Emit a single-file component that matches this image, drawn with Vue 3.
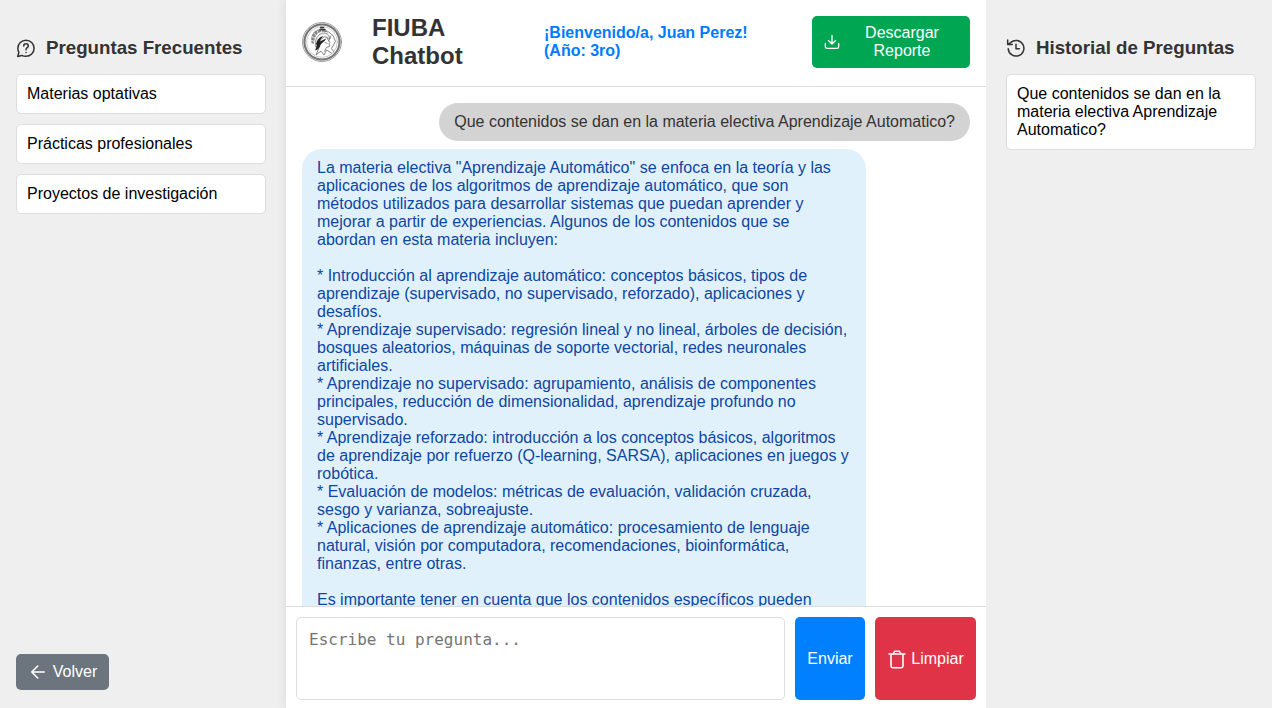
<script setup>
const faqs = ['Materias optativas', 'Prácticas profesionales', 'Proyectos de investigación']
const history = ['Que contenidos se dan en la materia electiva Aprendizaje Automatico?']
const answer = `La materia electiva "Aprendizaje Automático" se enfoca en la teoría y las aplicaciones de los algoritmos de aprendizaje automático, que son métodos utilizados para desarrollar sistemas que puedan aprender y mejorar a partir de experiencias. Algunos de los contenidos que se abordan en esta materia incluyen:

* Introducción al aprendizaje automático: conceptos básicos, tipos de aprendizaje (supervisado, no supervisado, reforzado), aplicaciones y desafíos.
* Aprendizaje supervisado: regresión lineal y no lineal, árboles de decisión, bosques aleatorios, máquinas de soporte vectorial, redes neuronales artificiales.
* Aprendizaje no supervisado: agrupamiento, análisis de componentes principales, reducción de dimensionalidad, aprendizaje profundo no supervisado.
* Aprendizaje reforzado: introducción a los conceptos básicos, algoritmos de aprendizaje por refuerzo (Q-learning, SARSA), aplicaciones en juegos y robótica.
* Evaluación de modelos: métricas de evaluación, validación cruzada, sesgo y varianza, sobreajuste.
* Aplicaciones de aprendizaje automático: procesamiento de lenguaje natural, visión por computadora, recomendaciones, bioinformática, finanzas, entre otras.

Es importante tener en cuenta que los contenidos específicos pueden`
</script>

<template>
  <div class="app">
    <aside class="side">
      <h3>
        <svg class="hicon" viewBox="0 0 24 24"><path d="M12 22c5.400 0 9.700-4.400 9.700-9.700S17.400 2.600 12 2.600s-9.800 4.300-9.800 9.700c0 1.800.5 3.500 1.300 4.900L2 22.300l5-1.400A9.800 9.800 0 0 0 12 22Z" /><path d="M9.300 9.500c0-3.300 5.400-3.300 5.400 0 0 2.300-2.700 2-2.700 4.500M12 17.300v.1" /></svg>
        Preguntas Frecuentes
      </h3>
      <ul><li v-for="q in faqs" :key="q">{{ q }}</li></ul>
      <button class="back">
        <svg class="bicon" viewBox="0 0 24 24"><path d="M19.500 12H4.500m7.200-7.200L4.500 12l7.200 7.200" /></svg>
        Volver
      </button>
    </aside>

    <main class="chat">
      <header>
        <svg class="seal" viewBox="0 0 40 40">
          <circle cx="20" cy="20" r="19.500" fill="#fff" stroke="#777" stroke-width=".7" />
          <circle cx="20" cy="20" r="17.500" fill="none" stroke="#777" stroke-width="2.200" stroke-dasharray="1.300 .9 .7 1 1.700 .8" />
          <circle cx="20" cy="20" r="15.400" fill="#fff" stroke="#999" stroke-width=".5" />
          <path d="M9.500 21C8 13 12 7.500 19 7c4-.3 6 1 7.500 3.500l-5-.8c-5 0-8 3-9 8.300l-1 4Z" fill="#888" />
          <path d="M9.500 18.500l3 .8m-2.300-4.600 3.300 1.600m-1.300-5 2.600 2.800m.4-5 1.400 3.400m3-4-.4 3.300" stroke="#fff" stroke-width=".8" />
          <path d="M13.500 20c.5-6 5-9.500 9.500-9 3 .4 4.500 3 5 6l-4-2c-3-.5-5 2-6 5l-4 5Z" fill="#eee" stroke="#666" stroke-width=".7" />
          <path d="M14 22c1-4 3-6.500 7-8-1 2-3 3.500-3 5.500l6-3c-1 4-5 3.500-6 8-1 2.500-3 3.500-5 4l2-5Z" fill="#222" />
          <path d="M25 16l3 4.500-1 1 .7 3-3.200.8-2 4M17 26l-3 7 5-4 3 4 2.500-5 5 3M26 9.500l5 4 2.500 6-4 7 2.500 3.500M29 14l-2.500 5M23 20.500l2 .8" fill="none" stroke="#777" stroke-width=".9" />
          <path d="M18 7.500h5M18.500 5.500h3" stroke="#333" stroke-width="1.400" />
        </svg>
        <h1>FIUBA Chatbot</h1>
        <div class="welcome">¡Bienvenido/a, Juan Perez! (Año: 3ro)</div>
        <button class="download">
          <svg viewBox="0 0 24 24"><path d="M2 14v5a2.500 2.500 0 0 0 2.500 2.500h15A2.500 2.500 0 0 0 22 19v-5M12 2v13m0 0-5-5m5 5 5-5" /></svg>
          <span>Descargar Reporte</span>
        </button>
      </header>
      <section class="messages">
        <div class="msg user">Que contenidos se dan en la materia electiva Aprendizaje Automatico?</div>
        <div class="msg bot">{{ answer }}</div>
      </section>
      <footer>
        <textarea placeholder="Escribe tu pregunta..."></textarea>
        <button class="send">Enviar</button>
        <button class="clear">
          <svg viewBox="0 0 24 24"><path d="M4.800 6v14.500a2 2 0 0 0 2 2h10.400a2 2 0 0 0 2-2V6M2.500 6h19M7.500 5.800l1-2.200a1.500 1.500 0 0 1 1.400-1h4.200a1.500 1.500 0 0 1 1.400 1l1 2.200" /></svg>
          Limpiar
        </button>
      </footer>
    </main>

    <aside class="side right">
      <h3>
        <svg class="hicon" viewBox="0 0 24 24"><path d="M2.700 13A9.400 9.400 0 1 0 5.800 5.300L2.500 7.800M2 2.500v5.300h5.500M12 7.500V13h4" /></svg>
        Historial de Preguntas
      </h3>
      <ul><li v-for="q in history" :key="q">{{ q }}</li></ul>
    </aside>
  </div>
</template>

<style>
body { margin: 0; overflow: hidden; }
</style>

<style scoped>
* { box-sizing: border-box; }
.app { display: flex; height: 708px; font: 16px/18px "Liberation Sans", Arial, sans-serif; background: #efefef; }
svg { flex: none; fill: none; stroke: currentColor; stroke-width: 1.9; stroke-linecap: round; stroke-linejoin: round; }
.side { width: 286px; padding: 37px 20px 18px 16px; display: flex; flex-direction: column; background: #efefef; }
.right { padding-left: 20px; padding-right: 16px; position: relative; }
h3 { margin: 0 0 16px; height: 21px; display: flex; align-items: center; gap: 10px; font-size: 18.72px; line-height: 21px; color: #333; white-space: nowrap; }
.hicon { width: 20px; height: 20px; stroke-width: 1.8; }
ul { margin: 0; padding: 0; list-style: none; display: flex; flex-direction: column; gap: 10px; }
li { padding: 10px; background: #fff; border: 1px solid #ddd; border-radius: 5px; color: #000; }
button { border: 0; border-radius: 5px; color: #fff; font: inherit; display: flex; align-items: center; justify-content: center; padding: 0; }
.back { margin-top: auto; width: 93px; height: 36px; background: #6c757d; gap: 5px; }
.bicon { width: 20px; height: 20px; }
.chat { width: 700px; display: flex; flex-direction: column; background: #fff; box-shadow: 0 0 10px rgba(0, 0, 0, .1); }
header { height: 87px; flex: none; display: flex; align-items: center; padding: 0 16px 3px; border-bottom: 1px solid #ddd; }
.seal { width: 40px; height: 40px; stroke: none; }
h1 { width: 112px; margin: 0 60px 0 30px; font-size: 24px; line-height: 28px; color: #333; }
.welcome { width: 218px; margin-right: 50px; font-weight: bold; color: #007bff; }
.download { width: 158px; height: 52px; background: #00a651; padding: 0 12px; }
.download svg { width: 16px; height: 16px; stroke-width: 2; }
.download span { flex: 1; padding-left: 6px; }
.messages { flex: 1; min-height: 0; overflow: hidden; padding: 16px 16px 0; display: flex; flex-direction: column; }
.msg { flex: none; padding: 10px 15px; border-radius: 20px; }
.user { align-self: flex-end; margin-bottom: 8px; background: #d3d3d3; color: #333; }
.bot { width: 564px; padding-bottom: 46px; background: #e1f1fc; color: #0d47a1; white-space: pre-wrap; }
footer { height: 102px; flex: none; display: flex; gap: 10px; padding: 10px 10px 8px; border-top: 1px solid #ddd; }
textarea { flex: 1; min-width: 0; margin: 0; padding: 12px; border: 1px solid #ddd; border-radius: 5px; resize: none; font: 16px/19px "DejaVu Sans Mono", monospace; background: #fff; }
textarea::placeholder { color: #757575; }
.send { width: 70px; background: #007fff; }
.clear { width: 101px; background: #e03347; gap: 4px; }
.clear svg { width: 20px; height: 20px; }
</style>
